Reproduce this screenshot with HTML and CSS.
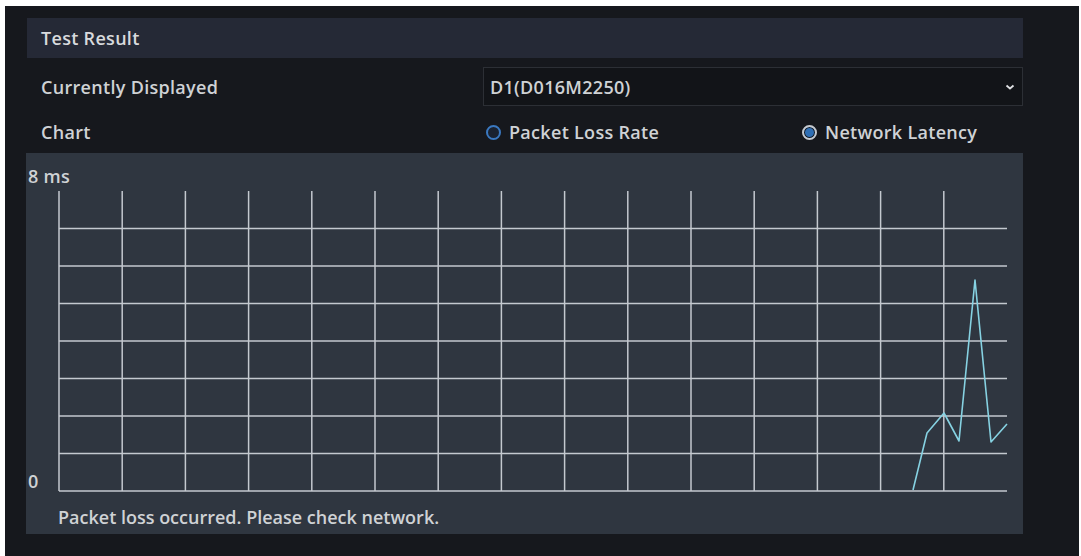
FILE: index.html
```html
<!DOCTYPE html>
<html>
<head>
    <meta charset="UTF-8">
    <title>Test Result</title>
    <link rel="stylesheet" href="styles.css">
</head>
<body>
    <div class="panel">
        <div class="section-title">Test Result</div>

        <div class="form-row">
            <label class="row-label">Currently Displayed</label>
            <div class="select-box">
                <span>D1(D016M2250)</span>
                <svg class="chevron" width="10" height="6" viewBox="0 0 10 6">
                    <path d="M1.5 1.5 L5 4.5 L8.5 1.5" fill="none" stroke="#e0e2e4" stroke-width="1.8"/>
                </svg>
            </div>
        </div>

        <div class="form-row chart-row">
            <label class="row-label">Chart</label>
            <div class="radio-set">
                <div class="radio-group">
                    <span class="radio"></span>
                    <span>Packet Loss Rate</span>
                </div>
                <div class="radio-group">
                    <span class="radio checked"></span>
                    <span>Network Latency</span>
                </div>
            </div>
        </div>

        <div class="chart">
            <div class="axis-top">8 ms</div>
            <div class="plot">
                <div class="axis-zero">0</div>
                <svg class="grid" width="950" height="302" viewBox="-1 -1 950 302">
                    <g stroke="#c4c9cf" stroke-width="1.5">
                        <line x1="0" y1="37.5" x2="948" y2="37.5"/>
                        <line x1="0" y1="75" x2="948" y2="75"/>
                        <line x1="0" y1="112.5" x2="948" y2="112.5"/>
                        <line x1="0" y1="150" x2="948" y2="150"/>
                        <line x1="0" y1="187.5" x2="948" y2="187.5"/>
                        <line x1="0" y1="225" x2="948" y2="225"/>
                        <line x1="0" y1="262.5" x2="948" y2="262.5"/>
                        <line x1="0" y1="300" x2="948" y2="300"/>
                        <line x1="0" y1="0" x2="0" y2="300"/>
                        <line x1="63.2" y1="0" x2="63.2" y2="300"/>
                        <line x1="126.4" y1="0" x2="126.4" y2="300"/>
                        <line x1="189.6" y1="0" x2="189.6" y2="300"/>
                        <line x1="252.8" y1="0" x2="252.8" y2="300"/>
                        <line x1="316" y1="0" x2="316" y2="300"/>
                        <line x1="379.2" y1="0" x2="379.2" y2="300"/>
                        <line x1="442.4" y1="0" x2="442.4" y2="300"/>
                        <line x1="505.6" y1="0" x2="505.6" y2="300"/>
                        <line x1="568.8" y1="0" x2="568.8" y2="300"/>
                        <line x1="632" y1="0" x2="632" y2="300"/>
                        <line x1="695.2" y1="0" x2="695.2" y2="300"/>
                        <line x1="758.4" y1="0" x2="758.4" y2="300"/>
                        <line x1="821.6" y1="0" x2="821.6" y2="300"/>
                        <line x1="884.8" y1="0" x2="884.8" y2="300"/>
                    </g>
                    <polyline points="854,299 868,242 885,222 900,250 916,89 932,251 948,233"
                              fill="none" stroke="#86d2e2" stroke-width="1.6" stroke-linejoin="round"/>
                </svg>
            </div>
            <div class="chart-note">Packet loss occurred. Please check network.</div>
        </div>
    </div>
</body>
</html>
```

FILE: styles.css
```css
:root {
    --panel-bg: #16181d;
    --title-bg: #252936;
    --chart-bg: #2f3640;
    --text-color: #cfd2d5;
    --border-color: #2c2f35;
    --accent: #2f6fb5;
}
body {
    margin: 0;
    background-color: #ffffff;
    font-family: "Open Sans", "DejaVu Sans", sans-serif;
    font-size: 18px;
    font-weight: 600;
    letter-spacing: 0.3px;
    color: var(--text-color);
}
.panel {
    margin: 6px 0 0 5px;
    width: 1074px;
    height: 550px;
    box-sizing: border-box;
    padding: 12px 56px 0 21px;
    background-color: var(--panel-bg);
}
.section-title {
    height: 40px;
    line-height: 40px;
    padding-left: 14px;
    margin-left: 1px;
    background-color: var(--title-bg);
    color: #d8dadd;
}
.form-row { display: flex; align-items: center; height: 39px; margin-top: 9px; }
.row-label { flex-shrink: 0; width: 457px; box-sizing: border-box; padding-left: 15px; }
.select-box {
    flex-grow: 1; height: 39px; box-sizing: border-box;
    display: flex; align-items: center; justify-content: space-between;
    padding: 0 7px 0 6px;
    border: 1px solid var(--border-color);
    background-color: #121418;
}
.chevron { margin-top: 1px; }
.chart-row { margin-top: 8px; height: 36px; }
.radio-set { display: flex; flex-grow: 1; }
.radio-group { display: flex; align-items: center; gap: 8px; width: 316px; }
.radio {
    width: 11px; height: 11px; border-radius: 50%;
    border: 2px solid #3a78c0; background-color: #1a2230;
    margin-left: 3px;
}
.radio.checked {
    border-color: #c5c9cf; background-color: var(--accent);
    box-shadow: inset 0 0 0 1px #15181d;
}
.chart {
    margin-top: 3px;
    height: 381px;
    box-sizing: border-box;
    padding: 12px 0 0 2px;
    background-color: var(--chart-bg);
}
.axis-top { height: 25px; line-height: 22px; }
.plot { display: flex; align-items: flex-end; }
.axis-zero { width: 30px; line-height: 20px; margin-bottom: 1px; }
.grid { display: block; }
.chart-note { padding: 14px 0 0 30px; line-height: 22px; letter-spacing: 0; }
```
